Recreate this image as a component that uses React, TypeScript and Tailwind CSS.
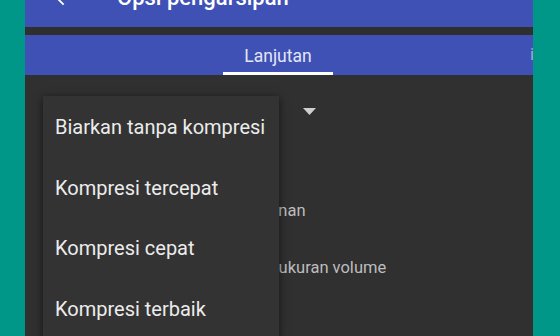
export default function App() {
  const options = [
    "Biarkan tanpa kompresi",
    "Kompresi tercepat",
    "Kompresi cepat",
    "Kompresi terbaik",
  ]

  return (
    <div
      className="w-[560px] h-[336px] overflow-hidden bg-[#009688] flex"
      style={{ fontFamily: "Roboto, 'Noto Sans', sans-serif" }}
    >
      <div className="ml-[25px] w-[508px] h-full bg-[#303030] flex flex-col overflow-hidden">
        {/* toolbar, mostly scrolled out of view */}
        <div className="mt-[-32px] h-[59px] shrink-0 bg-[#3f51b5] flex items-center text-white">
          <svg className="ml-[27px] w-[22px] h-[22px]" viewBox="0 0 24 24" fill="currentColor">
            <path d="M20 11H7.83l5.59-5.59L12 4l-8 8 8 8 1.41-1.41L7.83 13H20v-2z" />
          </svg>
          <span className="ml-[43px] text-[22px] font-medium">Opsi pengarsipan</span>
        </div>
        <div className="h-[8px] shrink-0 bg-[#2f2f2f]" />

        {/* tabs */}
        <div className="h-[40px] shrink-0 bg-[#3f51b5] flex">
          <div className="ml-[198px] w-[110px] flex flex-col">
            <div className="flex-1 flex items-center justify-center pt-[5px] text-[17.5px] text-[#e3e6f5]">
              Lanjutan
            </div>
            <div className="h-[3px] bg-white" />
          </div>
          <div className="ml-auto mr-[-1px] w-[4px] overflow-hidden flex items-center text-[17px] text-[#9fa8da]">i</div>
        </div>

        {/* content */}
        <div className="flex-1 relative">
          <div className="pt-[33px] flex flex-col">
            <svg className="ml-[278px] w-[13px] h-[7px]" viewBox="0 0 13 7" fill="#cfcfcf">
              <path d="M0 0h13L6.5 7z" />
            </svg>
            <div className="ml-[162px] mt-[88px] text-[16.5px] text-[#bdbdbd] leading-none">ruang simpanan</div>
            <div className="ml-[161px] mt-[40px] text-[16.5px] text-[#bdbdbd] leading-none">Pisahkan ke ukuran volume</div>
          </div>

          {/* dropdown popup */}
          <div className="absolute left-[18px] top-[21px] w-[236px] bg-[#333333] shadow-[0_2px_8px_rgba(0,0,0,0.6)] flex flex-col pt-[1px]">
            {options.map((o) => (
              <div key={o} className="h-[60.5px] flex items-center pl-[12px] text-[20px] text-[#ececec]">
                {o}
              </div>
            ))}
          </div>
        </div>
      </div>
    </div>
  )
}
